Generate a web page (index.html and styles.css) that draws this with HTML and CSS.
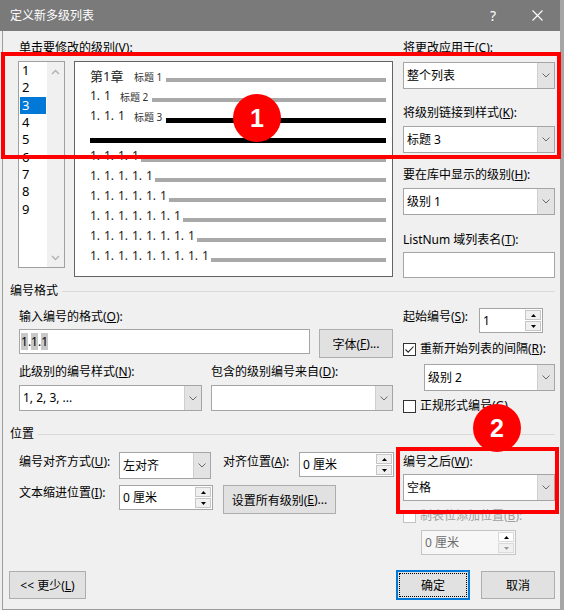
FILE: index.html
```html
<!DOCTYPE html>
<html lang="zh-CN">
<head>
<meta charset="utf-8">
<title>定义新多级列表</title>
<link rel="stylesheet" href="styles.css">
</head>
<body>
<div class="window">
  <div class="titlebar">
    <span class="title">定义新多级列表</span>
    <span class="tb-help">?</span>
    <span class="tb-close"><svg width="11" height="11" viewBox="0 0 11 11"><path d="M.5 .5 10.5 10.5M10.5 .5 .5 10.5" stroke="#fff" stroke-width="1.1" fill="none"/></svg></span>
  </div>
  <div class="body">
    <div class="top">
      <div class="top-left">
        <div class="lbl lbl-level">单击要修改的级别(<u>V</u>):</div>
        <div class="level-row">
          <div class="levels">
            <div class="level-items">
              <div class="level-item">1</div>
              <div class="level-item">2</div>
              <div class="level-item sel">3</div>
              <div class="level-item">4</div>
              <div class="level-item">5</div>
              <div class="level-item">6</div>
              <div class="level-item">7</div>
              <div class="level-item">8</div>
              <div class="level-item">9</div>
            </div>
            <div class="scroll">
              <svg width="9" height="6" viewBox="0 0 9 6"><path d="M1 5 4.5 1.5 8 5" fill="none" stroke="#b4b4b4" stroke-width="1.5"/></svg>
              <svg width="9" height="6" viewBox="0 0 9 6"><path d="M1 1 4.5 4.5 8 1" fill="none" stroke="#b4b4b4" stroke-width="1.5"/></svg>
            </div>
          </div>
          <div class="preview">
            <div class="pv-row"><span class="pv-num pv-chap n44">第1章</span><span class="pv-tag">标题 1</span><span class="pv-bar"></span></div>
            <div class="pv-row"><span class="pv-num n30">1. 1</span><span class="pv-tag">标题 2</span><span class="pv-bar"></span></div>
            <div class="pv-row"><span class="pv-num n44">1. 1. 1</span><span class="pv-tag">标题 3</span><span class="pv-bar dark"></span></div>
            <div class="pv-row"><span class="pv-bar dark"></span></div>
            <div class="pv-row"><span class="pv-num n51">1. 1. 1. 1</span><span class="pv-bar"></span></div>
            <div class="pv-row"><span class="pv-num n65">1. 1. 1. 1. 1</span><span class="pv-bar"></span></div>
            <div class="pv-row"><span class="pv-num n79">1. 1. 1. 1. 1. 1</span><span class="pv-bar"></span></div>
            <div class="pv-row"><span class="pv-num n93">1. 1. 1. 1. 1. 1. 1</span><span class="pv-bar"></span></div>
            <div class="pv-row"><span class="pv-num n107">1. 1. 1. 1. 1. 1. 1. 1</span><span class="pv-bar"></span></div>
            <div class="pv-row"><span class="pv-num n121">1. 1. 1. 1. 1. 1. 1. 1. 1</span><span class="pv-bar"></span></div>
          </div>
        </div>
      </div>
      <div class="top-right">
        <div class="lbl">将更改应用于(<u>C</u>):</div>
        <div class="select mt6"><span class="sel-text">整个列表</span><span class="sel-btn"><svg width="8" height="5" viewBox="0 0 8 5"><path d="M.5 .5 4 4 7.5 .5" fill="none" stroke="#6a6a6a"/></svg></span></div>
        <div class="lbl mt16">将级别链接到样式(<u>K</u>):</div>
        <div class="select mt5"><span class="sel-text">标题 3</span><span class="sel-btn"><svg width="8" height="5" viewBox="0 0 8 5"><path d="M.5 .5 4 4 7.5 .5" fill="none" stroke="#6a6a6a"/></svg></span></div>
        <div class="lbl mt14">要在库中显示的级别(<u>H</u>):</div>
        <div class="select mt5"><span class="sel-text">级别 1</span><span class="sel-btn"><svg width="8" height="5" viewBox="0 0 8 5"><path d="M.5 .5 4 4 7.5 .5" fill="none" stroke="#6a6a6a"/></svg></span></div>
        <div class="lbl mt17">ListNum 域列表名(<u>T</u>):</div>
        <div class="textbox mt4"></div>
      </div>
    </div>

    <div class="sec-head sec-fmt"><span>编号格式</span><span class="sec-rule"></span></div>
    <div class="fmt">
      <div class="fmt-left">
        <div class="lbl mt10">输入编号的格式(<u>O</u>):</div>
        <div class="row mt4">
          <div class="fmt-input"><span><span class="hl">1</span>.<span class="hl">1</span>.<span class="hl">1</span></span></div>
          <div class="btn btn-font">字体(<u>F</u>)...</div>
        </div>
        <div class="row mt6">
          <div class="lbl lbl-a">此级别的编号样式(<u>N</u>):</div>
          <div class="lbl">包含的级别编号来自(<u>D</u>):</div>
        </div>
        <div class="row mt5">
          <div class="select sel-a"><span class="sel-text">1, 2, 3, ...</span><span class="sel-btn"><svg width="8" height="5" viewBox="0 0 8 5"><path d="M.5 .5 4 4 7.5 .5" fill="none" stroke="#6a6a6a"/></svg></span></div>
          <div class="select sel-b"><span class="sel-text"></span><span class="sel-btn"><svg width="8" height="5" viewBox="0 0 8 5"><path d="M.5 .5 4 4 7.5 .5" fill="none" stroke="#6a6a6a"/></svg></span></div>
        </div>
      </div>
      <div class="fmt-right">
        <div class="row mt9">
          <div class="lbl lbl-start">起始编号(<u>S</u>):</div>
          <div class="spin spin-64"><span class="spin-text">1</span><span class="spin-btns"><span class="spin-b"><svg width="5" height="3" viewBox="0 0 5 3"><path d="M0 3 2.5 0 5 3Z" fill="#000"/></svg></span><span class="spin-b"><svg width="5" height="3" viewBox="0 0 5 3"><path d="M0 0 2.5 3 5 0Z" fill="#000"/></svg></span></span></div>
        </div>
        <div class="chk-row mt8">
          <span class="chk"><svg width="11" height="11" viewBox="0 0 11 11"><path d="M1.5 5.5 4.2 8.2 9.5 2.5" fill="none" stroke="#222" stroke-width="1.1"/></svg></span>
          <span class="lbl">重新开始列表的间隔(<u>R</u>):</span>
        </div>
        <div class="select sel-lv2 mt7"><span class="sel-text">级别 2</span><span class="sel-btn"><svg width="8" height="5" viewBox="0 0 8 5"><path d="M.5 .5 4 4 7.5 .5" fill="none" stroke="#6a6a6a"/></svg></span></div>
        <div class="chk-row mt7">
          <span class="chk"></span>
          <span class="lbl">正规形式编号(<u>G</u>)</span>
        </div>
      </div>
    </div>

    <div class="sec-head sec-pos"><span>位置</span><span class="sec-rule"></span></div>
    <div class="pos">
      <div class="pos-left">
        <div class="row mt10">
          <div class="lbl lbl-w100 mt2">编号对齐方式(<u>U</u>):</div>
          <div class="select sel-align"><span class="sel-text">左对齐</span><span class="sel-btn"><svg width="8" height="5" viewBox="0 0 8 5"><path d="M.5 .5 4 4 7.5 .5" fill="none" stroke="#6a6a6a"/></svg></span></div>
          <div class="lbl lbl-w76 mt2">对齐位置(<u>A</u>):</div>
          <div class="spin spin-95"><span class="spin-text">0 厘米</span><span class="spin-btns"><span class="spin-b"><svg width="5" height="3" viewBox="0 0 5 3"><path d="M0 3 2.5 0 5 3Z" fill="#000"/></svg></span><span class="spin-b"><svg width="5" height="3" viewBox="0 0 5 3"><path d="M0 0 2.5 3 5 0Z" fill="#000"/></svg></span></span></div>
        </div>
        <div class="row mt6">
          <div class="lbl lbl-w100">文本缩进位置(<u>I</u>):</div>
          <div class="spin spin-94"><span class="spin-text">0 厘米</span><span class="spin-btns"><span class="spin-b"><svg width="5" height="3" viewBox="0 0 5 3"><path d="M0 3 2.5 0 5 3Z" fill="#000"/></svg></span><span class="spin-b"><svg width="5" height="3" viewBox="0 0 5 3"><path d="M0 0 2.5 3 5 0Z" fill="#000"/></svg></span></span></div>
          <div class="btn btn-all">设置所有级别(<u>E</u>)...</div>
        </div>
      </div>
      <div class="pos-right">
        <div class="lbl mt12">编号之后(<u>W</u>):</div>
        <div class="select mt4"><span class="sel-text">空格</span><span class="sel-btn"><svg width="8" height="5" viewBox="0 0 8 5"><path d="M.5 .5 4 4 7.5 .5" fill="none" stroke="#6a6a6a"/></svg></span></div>
        <div class="chk-row mt7">
          <span class="chk dis"></span>
          <span class="lbl dis-text">制表位添加位置(<u>B</u>):</span>
        </div>
        <div class="spin spin-dis mt6"><span class="spin-text">0 厘米</span><span class="spin-btns"><span class="spin-b spin-b-up"><svg width="5" height="3" viewBox="0 0 5 3"><path d="M0 3 2.5 0 5 3Z" fill="#000"/></svg></span><span class="spin-b"><svg width="5" height="3" viewBox="0 0 5 3"><path d="M0 0 2.5 3 5 0Z" fill="#9a9a9a"/></svg></span></span></div>
      </div>
    </div>

    <div class="footer">
      <div class="btn btn-less">&lt;&lt; 更少(<u>L</u>)</div>
      <div class="footer-right">
        <div class="btn btn-ok">确定</div>
        <div class="btn btn-cancel">取消</div>
      </div>
    </div>
  </div>

  <div class="mark mark1"></div>
  <div class="mark mark2"></div>
  <div class="badge badge1">1</div>
  <div class="badge badge2">2</div>
</div>
</body>
</html>
```

FILE: styles.css
```css
* { box-sizing: border-box; }
html, body { margin: 0; padding: 0; }
body {
  width: 564px;
  height: 610px;
  overflow: hidden;
  background: #f0f0f0;
  font-family: "Noto Sans", "Noto Sans CJK SC", sans-serif;
  font-size: 12px;
  color: #000;
}
u { text-decoration: underline; }

.window {
  position: relative;
  width: 564px;
  height: 610px;
  border-right: 4px solid #a6a6a6;
  background: #f0f0f0;
}

/* title bar */
.titlebar {
  display: flex;
  align-items: center;
  height: 31px;
  padding: 0 17px 0 10px;
  background: #7a7a7a;
  color: #fff;
}
.title { flex: 1; font-size: 12px; line-height: 16px; }
.tb-help { width: 12px; text-align: center; font-size: 14px; line-height: 16px; margin-right: 33px; }
.tb-close { display: flex; width: 11px; height: 11px; }

.body {
  margin-left: 2px;
  height: 579px;
  border-left: 1px solid #9c9c9c;
  border-bottom: 1px solid #9c9c9c;
}

/* generic */
.lbl { height: 16px; line-height: 16px; white-space: nowrap; }
.row { display: flex; align-items: flex-start; }
.mt1 { margin-top: 1px; }
.mt2 { margin-top: 2px; }
.mt4 { margin-top: 4px; }
.mt5 { margin-top: 5px; }
.mt6 { margin-top: 6px; }
.mt7 { margin-top: 7px; }
.mt8 { margin-top: 8px; }
.mt9 { margin-top: 9px; }
.mt10 { margin-top: 10px; }
.mt12 { margin-top: 12px; }
.mt14 { margin-top: 14px; }
.mt16 { margin-top: 16px; }
.mt17 { margin-top: 17px; }

.select {
  display: flex;
  height: 27px;
  border: 1px solid #a5a5a5;
  background: #fff;
  flex: none;
}
.sel-text { flex: 1; padding-left: 3px; line-height: 25px; white-space: nowrap; overflow: hidden; }
.sel-btn {
  width: 17px;
  display: flex;
  align-items: center;
  justify-content: center;
  background: #e3e3e3;
  border-left: 1px solid #cfcfcf;
}
.textbox { height: 26px; border: 1px solid #a5a5a5; background: #fff; }

.spin {
  display: flex;
  height: 25px;
  border: 1px solid #a5a5a5;
  background: #fff;
  flex: none;
}
.spin-text { flex: 1; padding-left: 3px; line-height: 23px; white-space: nowrap; }
.spin-btns {
  width: 17px;
  display: flex;
  flex-direction: column;
  gap: 1px;
  padding: 1px 1px 1px 0;
}
.spin-b {
  flex: 1;
  display: flex;
  align-items: center;
  justify-content: center;
  border: 1px solid #c6c6c6;
  background: #f0f0f0;
}

.btn {
  display: flex;
  align-items: center;
  justify-content: center;
  height: 29px;
  border: 1px solid #adadad;
  background: #e1e1e1;
  white-space: nowrap;
  flex: none;
}

.chk-row { display: flex; align-items: center; height: 16px; }
.chk {
  width: 13px;
  height: 13px;
  margin-right: 4px;
  display: flex;
  align-items: center;
  justify-content: center;
  border: 1px solid #333;
  background: #fff;
  flex: none;
}
.chk.dis { border-color: #c2c2c2; }
.dis-text { color: #a0a0a0; }

/* top area */
.top { display: flex; padding: 9px 0 0 15px; }
.top-left { width: 375px; flex: none; }
.top-right { width: 152px; margin-left: 10px; flex: none; }
.lbl-level { padding-left: 1px; }
.level-row { display: flex; align-items: flex-start; margin-top: 5px; }

.levels {
  display: flex;
  width: 47px;
  height: 207px;
  border: 1px solid #a0a0a0;
  background: #fff;
  flex: none;
}
.level-items { width: 28px; }
.level-item {
  width: 26px;
  height: 17.33px;
  line-height: 17.33px;
  margin-left: 1px;
  padding-left: 2px;
  font-size: 13px;
}
.level-item.sel { background: #0078d7; color: #fff; }
.scroll {
  width: 17px;
  display: flex;
  flex-direction: column;
  justify-content: space-between;
  align-items: center;
  padding: 7px 0 6px;
  background: #f0f0f0;
}

.preview {
  width: 319px;
  height: 216px;
  margin-left: 9px;
  flex: none;
  padding: 8px 6px 0 15px;
  border: 1px solid #646464;
  background: #fff;
}
.pv-row { display: flex; align-items: center; height: 20px; }
.pv-num {
  flex: none;
  margin-bottom: 8px;
  font-size: 12px;
  line-height: 14px;
  white-space: nowrap;
  word-spacing: 0.8px;
  color: #222;
}
.pv-chap { font-size: 13px; word-spacing: 0; }
.pv-tag {
  flex: none;
  width: 32px;
  margin-bottom: 7px;
  font-size: 10px;
  line-height: 12px;
  white-space: nowrap;
  color: #333;
}
.pv-bar { flex: 1; height: 4px; background: #a9a9a9; }
.pv-bar.dark { height: 5px; background: #000; }
.n30 { width: 30px; }
.n44 { width: 44px; }
.n51 { width: 51px; }
.n65 { width: 65px; }
.n79 { width: 79px; }
.n93 { width: 93px; }
.n107 { width: 107px; }
.n121 { width: 121px; }

/* section heads */
.sec-head {
  display: flex;
  align-items: center;
  height: 16px;
  line-height: 16px;
  padding: 0 5px 0 7px;
  white-space: nowrap;
}
.sec-rule { flex: 1; height: 1px; margin-left: 4px; background: #d9d9d9; }
.sec-fmt { margin-top: 5px; }
.sec-pos { margin-top: 12px; }

/* numbering format */
.fmt { display: flex; align-items: flex-start; }
.fmt-left { width: 390px; padding-left: 16px; flex: none; }
.fmt-right { width: 152px; margin-left: 10px; flex: none; }
.fmt-input {
  width: 291px;
  height: 25px;
  display: flex;
  align-items: center;
  padding-left: 1px;
  border: 1px solid #a5a5a5;
  background: #fff;
  flex: none;
}
.hl { background: #c8c8c8; }
.btn-font { width: 74px; margin-left: 9px; }
.lbl-a { width: 192px; }
.sel-a { width: 183px; height: 26px; }
.sel-b { width: 182px; height: 26px; margin-left: 9px; }
.sel-a .sel-text, .sel-b .sel-text { line-height: 24px; }
.lbl-start { width: 76px; margin-top: 1px; flex: none; }
.spin-64 { width: 64px; }
.sel-lv2 { width: 131px; margin-left: 21px; }

/* position */
.pos { display: flex; align-items: flex-start; }
.pos-left { width: 391px; padding-left: 16px; flex: none; }
.pos-right { width: 152px; margin-left: 9px; flex: none; }
.lbl-w100 { width: 100px; flex: none; }
.lbl-w76 { width: 76px; margin-left: 12px; flex: none; }
.sel-align { width: 92px; }
.spin-95 { width: 95px; }
.spin-94 { width: 94px; }
.btn-all { width: 113px; margin-left: 10px; }
.spin-dis {
  width: 95px;
  margin-left: 18px;
  border-color: #c4c4c4;
  background: #f7f7f7;
  color: #6d6d6d;
}
.spin-dis .spin-b { border-color: #dadada; }
.spin-dis .spin-b-up { background: #fff; }

/* footer */
.footer {
  display: flex;
  justify-content: space-between;
  align-items: center;
  margin-top: 15px;
  padding: 0 5px 0 6px;
}
.btn-less { width: 77px; height: 28px; }
.footer-right { display: flex; align-items: center; gap: 11px; }
.btn-ok {
  width: 74px;
  height: 30px;
  border: 2px solid #0078d7;
  outline: 1px dotted #000;
  outline-offset: -4px;
}
.btn-cancel { width: 74px; height: 28px; }

/* annotation overlays */
.mark { position: absolute; border: 4px solid #ff0000; }
.mark1 { left: 1px; top: 52px; width: 560px; height: 107px; }
.mark2 { left: 396px; top: 447px; width: 163px; height: 67px; }
.badge {
  position: absolute;
  width: 48px;
  height: 48px;
  border-radius: 50%;
  background: #ff0000;
  color: #fff;
  display: flex;
  align-items: center;
  justify-content: center;
  font-family: "Liberation Sans", sans-serif;
  font-weight: bold;
  font-size: 25px;
}
.badge1 { left: 233px; top: 94px; }
.badge2 { left: 473px; top: 404px; }
```
